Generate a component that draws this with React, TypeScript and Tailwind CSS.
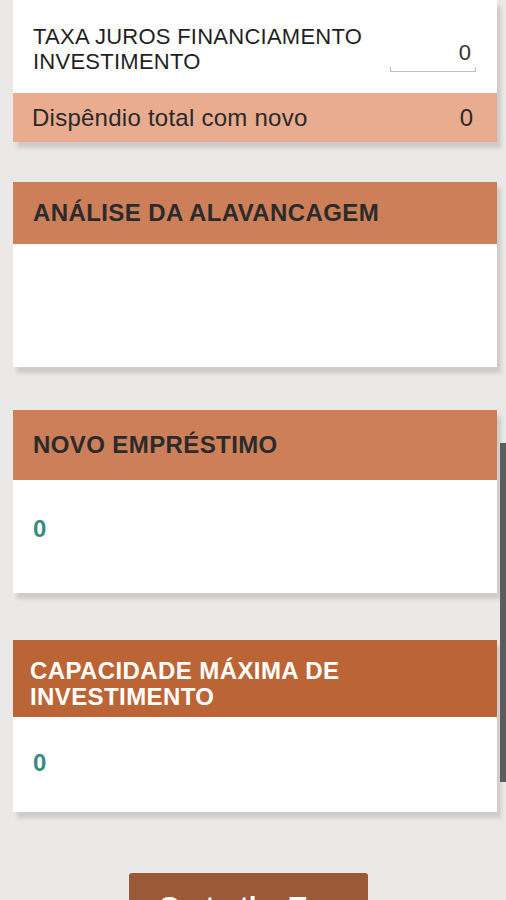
const font = { fontFamily: '"Liberation Sans", Arial, sans-serif' };

function SectionCard({
  title,
  headerClass,
  bodyClass,
  value,
}: {
  title: React.ReactNode;
  headerClass: string;
  bodyClass: string;
  value?: string;
}) {
  return (
    <div className="w-[484px] shadow-[4px_6px_4px_rgba(0,0,0,0.13)]">
      <div className={headerClass}>{title}</div>
      <div className={bodyClass}>
        {value !== undefined && (
          <p className="text-[24px] font-bold leading-[28px] text-[#3b8a80]">
            {value}
          </p>
        )}
      </div>
    </div>
  );
}

function App() {
  return (
    <div
      className="relative h-[900px] w-[506px] overflow-hidden bg-[#ebe9e8]"
      style={font}
    >
      <div className="flex flex-col pl-[13px]">
        {/* top card, scrolled partly out of view */}
        <div className="w-[484px] shadow-[4px_6px_4px_rgba(0,0,0,0.13)]">
          <div className="flex items-end justify-between bg-white pl-5 pr-[21px] pt-6 pb-[19px]">
            <p className="text-[22px] leading-[25px] tracking-[0.25px] text-[#1f1f1f]">
              TAXA JUROS FINANCIAMENTO
              <br />
              INVESTIMENTO
            </p>
            <div className="relative mb-[2px] w-[86px] pb-[5px] text-right">
              <span className="pr-[5px] text-[22px] leading-[25px] text-[#333]">
                0
              </span>
              <div className="absolute bottom-0 left-0 h-[5px] w-full border-x border-b border-[#bdbdbd]" />
            </div>
          </div>
          <div className="flex h-[49px] items-center justify-between bg-[#e9ac8f] pl-[19px] pr-6">
            <span className="text-[24px] tracking-[0.25px] text-[#2a2a2a]">
              Dispêndio total com novo
            </span>
            <span className="text-[24px] text-[#2a2a2a]">0</span>
          </div>
        </div>

        <div className="mt-10">
          <SectionCard
            title="ANÁLISE DA ALAVANCAGEM"
            headerClass="flex h-[62px] items-center bg-[#cc7f58] pl-5 text-[24px] font-bold tracking-[0.4px] text-[#2b2b2b]"
            bodyClass="h-[123px] bg-white"
          />
        </div>

        <div className="mt-[43px]">
          <SectionCard
            title="NOVO EMPRÉSTIMO"
            headerClass="flex h-[70px] items-center bg-[#cc7f58] pl-5 text-[24px] font-bold tracking-[0.4px] text-[#2b2b2b]"
            bodyClass="h-[113px] bg-white pl-5 pt-[35px]"
            value="0"
          />
        </div>

        <div className="mt-[47px]">
          <SectionCard
            title={
              <>
                CAPACIDADE MÁXIMA DE
                <br />
                INVESTIMENTO
              </>
            }
            headerClass="h-[77px] bg-[#bb6536] pl-[17px] pt-[18px] text-[24px] font-bold leading-[26px] tracking-[0.4px] text-white"
            bodyClass="h-[95px] bg-white pl-5 pt-[32px]"
            value="0"
          />
        </div>

        <div className="mt-[61px] flex justify-center pr-[22px]">
          <button className="w-[239px] rounded-t-[3px] bg-[#9b5a37] pt-[13px] pb-3 text-[28px] font-bold text-white">
            Go to the Top
          </button>
        </div>
      </div>

      {/* scrollbar thumb */}
      <div className="absolute right-0 top-[443px] h-[339px] w-[6px] bg-[#5c5c5c]" />
    </div>
  );
}

export default App;
